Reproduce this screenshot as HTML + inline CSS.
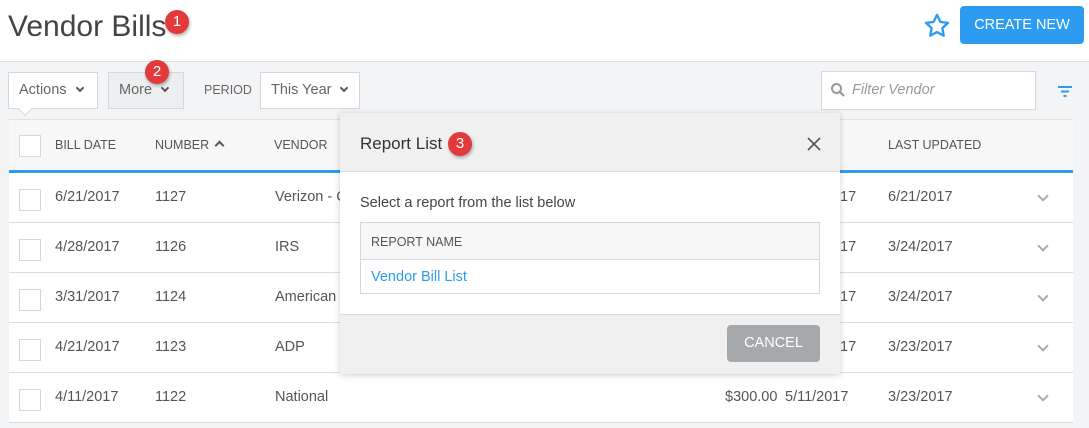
<!DOCTYPE html>
<html><head><style>
*{box-sizing:border-box;margin:0;padding:0}
body{width:1089px;height:428px;overflow:hidden;background:#f3f4f6;font-family:"Liberation Sans",sans-serif;color:#555;position:relative}
.a{position:absolute}
.badge{position:absolute;width:24px;height:24px;border-radius:50%;background:#e2393b;color:#fff;font-size:15px;text-align:center;line-height:24px;box-shadow:1px 2px 3px rgba(0,0,0,.3)}
.btn{position:absolute;height:37px;border:1px solid #d3d8de;background:#fff;font-size:14.5px;color:#666;line-height:35px;padding-left:10px}
.chev{display:inline-block;width:6px;height:6px;border-right:2px solid #555;border-bottom:2px solid #555;transform:rotate(45deg);margin-left:10px;position:relative;top:-3px}
.th{position:absolute;top:138px;font-size:12.5px;color:#555}
.row{position:absolute;left:9px;width:1064px;height:50px;background:#fff;border-bottom:1px solid #d8dde4;font-size:14.5px;color:#555}
.row span{position:absolute;top:16px}
.cb{position:absolute;left:10px;top:16px;width:22px;height:22px;border:1px solid #d3d7dc;background:#fff}
.rc{position:absolute;left:1030px;top:19px;width:8px;height:8px;border-right:2px solid #aaa;border-bottom:2px solid #aaa;transform:rotate(45deg)}
</style></head><body>
<div class="a" style="left:0;top:0;width:1089px;height:62px;background:#fff;border-bottom:1px solid #dde1e6"></div>
<div class="a" style="left:8px;top:10px;font-size:30px;color:#444">Vendor Bills</div>
<div class="badge" style="left:165px;top:10px">1</div>
<svg class="a" style="left:923px;top:12px" width="28" height="28" viewBox="0 0 24 24"><path d="M12 2.5l2.9 6 6.5.8-4.8 4.5 1.2 6.5L12 17.2l-5.8 3.1 1.2-6.5L2.6 9.3l6.5-.8z" fill="none" stroke="#2d9cf0" stroke-width="2" stroke-linejoin="round"/></svg>
<div class="a" style="left:960px;top:6px;width:124px;height:38px;background:#2d9cf0;border-radius:4px;color:#fff;font-size:14.5px;text-align:center;line-height:38px">CREATE NEW</div>

<div class="btn" style="left:8px;top:72px;width:90px">Actions<span class="chev"></span></div>
<div class="a" style="left:20px;top:104px;width:10px;height:10px;background:#fff;border-right:1px solid #d3d8de;border-bottom:1px solid #d3d8de;transform:rotate(45deg)"></div>
<div class="btn" style="left:108px;top:72px;width:76px;background:#eceef0">More<span class="chev"></span></div>
<div class="badge" style="left:145px;top:60px">2</div>
<div class="a" style="left:204px;top:83px;font-size:12.5px;color:#666">PERIOD</div>
<div class="btn" style="left:260px;top:72px;width:100px">This Year<span class="chev"></span></div>
<div class="a" style="left:821px;top:71px;width:215px;height:39px;border:1px solid #d3d8de;background:#fff"></div>
<svg class="a" style="left:830px;top:82px" width="16" height="16" viewBox="0 0 16 16"><circle cx="6.5" cy="6.5" r="4.5" fill="none" stroke="#999" stroke-width="2"/><path d="M10 10l4 4" stroke="#999" stroke-width="2.2"/></svg>
<div class="a" style="left:852px;top:82px;font-size:14.5px;font-style:italic;color:#999">Filter Vendor</div>
<svg class="a" style="left:1057px;top:85px" width="16" height="14"><path d="M1 2h14M4 6.5h8M6.5 11h3" stroke="#2d9cf0" stroke-width="2"/></svg>

<div class="a" style="left:9px;top:119px;width:1064px;height:54px;background:#f7f7f8;border-top:1px solid #dde1e6;border-bottom:3px solid #2d9cf0"></div>
<div class="cb" style="left:19px;top:135px"></div>
<div class="th" style="left:55px">BILL DATE</div>
<div class="th" style="left:155px">NUMBER</div>
<div class="a" style="left:216px;top:142px;width:7px;height:7px;border-left:2px solid #555;border-top:2px solid #555;transform:rotate(45deg)"></div>
<div class="th" style="left:274px">VENDOR</div>
<div class="th" style="left:888px">LAST UPDATED</div>

<div class="row" style="top:173px"><div class="cb"></div><span style="left:46px">6/21/2017</span><span style="left:146px">1127</span><span style="left:266px">Verizon - C</span><span style="left:831px">17</span><span style="left:879px">6/21/2017</span><div class="rc"></div></div>
<div class="row" style="top:223px"><div class="cb"></div><span style="left:46px">4/28/2017</span><span style="left:146px">1126</span><span style="left:266px">IRS</span><span style="left:831px">17</span><span style="left:879px">3/24/2017</span><div class="rc"></div></div>
<div class="row" style="top:273px"><div class="cb"></div><span style="left:46px">3/31/2017</span><span style="left:146px">1124</span><span style="left:266px">American</span><span style="left:831px">17</span><span style="left:879px">3/24/2017</span><div class="rc"></div></div>
<div class="row" style="top:323px"><div class="cb"></div><span style="left:46px">4/21/2017</span><span style="left:146px">1123</span><span style="left:266px">ADP</span><span style="left:831px">17</span><span style="left:879px">3/23/2017</span><div class="rc"></div></div>
<div class="row" style="top:373px"><div class="cb"></div><span style="left:716px">$300.00</span><span style="left:46px">4/11/2017</span><span style="left:146px">1122</span><span style="left:266px">National</span><span style="left:776px">5/11/2017</span><span style="left:879px">3/23/2017</span><div class="rc"></div></div>

<div class="a" style="left:340px;top:113px;width:500px;height:261px;background:#fff;box-shadow:0 1px 6px rgba(0,0,0,.2)">
 <div class="a" style="left:0;top:0;width:500px;height:59px;background:#f0f0f0;border-bottom:1px solid #d8dde4"></div>
 <div class="a" style="left:20px;top:21px;font-size:17px;color:#333">Report List</div>
 <div class="badge" style="left:108px;top:19px">3</div>
 <svg class="a" style="left:467px;top:24px" width="14" height="14"><path d="M1 1l12 12M13 1L1 13" stroke="#555" stroke-width="1.6"/></svg>
 <div class="a" style="left:20px;top:82px;font-size:14.5px;color:#444">Select a report from the list below</div>
 <div class="a" style="left:20px;top:109px;width:460px;height:72px;border:1px solid #d3d7dc">
  <div class="a" style="left:0;top:0;width:458px;height:37px;background:#f7f7f7;border-bottom:1px solid #d3d7dc"></div>
  <div class="a" style="left:10px;top:12px;font-size:12.5px;color:#555">REPORT NAME</div>
  <div class="a" style="left:10px;top:46px;font-size:14.5px;color:#2d9cf0">Vendor Bill List</div>
 </div>
 <div class="a" style="left:0;top:201px;width:500px;height:60px;background:#f0f0f0;border-top:1px solid #d8dde4"></div>
 <div class="a" style="left:387px;top:212px;width:93px;height:37px;background:#a6a9ac;border-radius:4px;color:#fff;font-size:14.5px;text-align:center;line-height:37px">CANCEL</div>
</div>
</body></html>
